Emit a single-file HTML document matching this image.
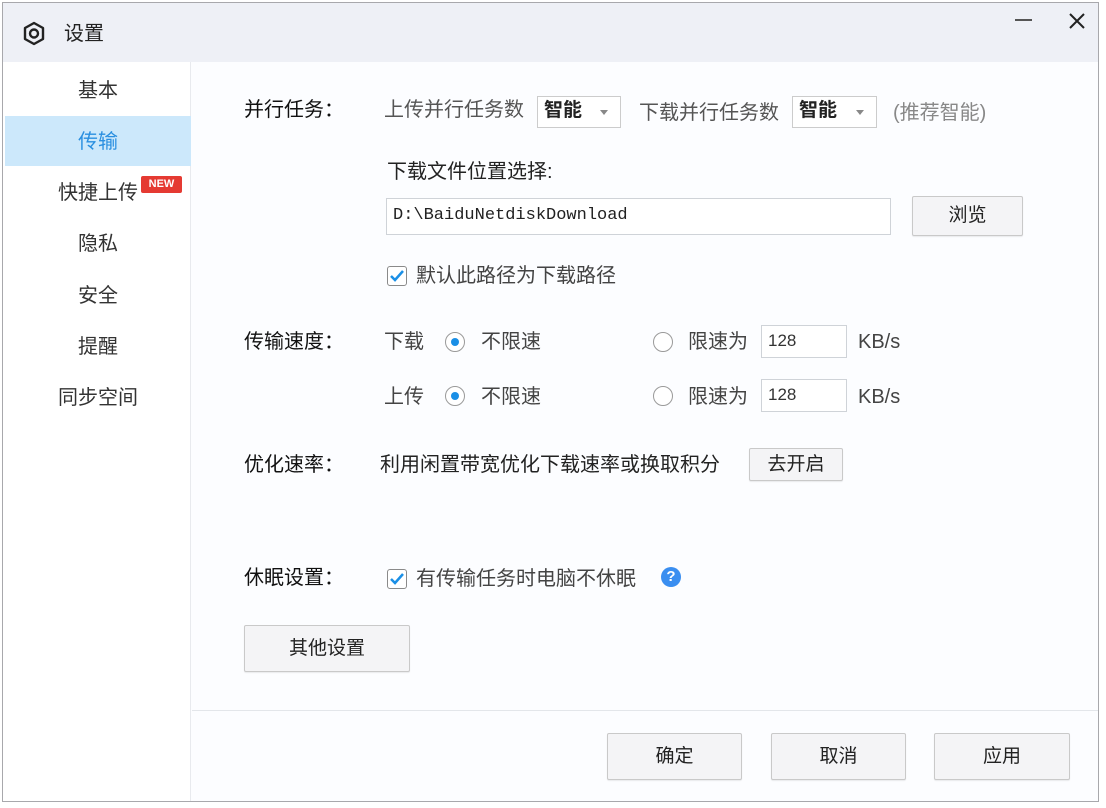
<!DOCTYPE html><html><head><meta charset="utf-8"><style>
*{margin:0;padding:0;box-sizing:border-box}
body{width:1106px;height:808px;background:#fff;position:relative;overflow:hidden;font-family:"Liberation Sans","Noto Sans CJK SC",sans-serif;color:#333;font-size:20px;line-height:1.2}
.a{position:absolute;white-space:nowrap}
.btn{position:absolute;border:1px solid #c9c9c9;background:#f4f4f6;border-radius:2px;text-align:center;color:#222;box-shadow:0 1px 1px rgba(0,0,0,.08);font-size:19px}
.sel{position:absolute;border:1px solid #ccc;background:#fff;height:32px;font-weight:bold;color:#222;padding:3px 0 0 6px;font-size:19px}
.sel:after{content:"";position:absolute;right:12px;top:13px;border:4px solid transparent;border-top:5px solid #888}
.rad{position:absolute;width:20px;height:20px;border:1px solid #9a9a9a;border-radius:50%;background:#fff}
.rad.on:after{content:"";position:absolute;left:5px;top:5px;width:8px;height:8px;border-radius:50%;background:#1a8fe6}
.inp{position:absolute;border:1px solid #cfd3d8;background:#fff;height:33px;font-size:17px;padding:5px 0 0 6px}
.chk{position:absolute;width:20px;height:20px;border:1px solid #8a8a8a;border-radius:3px;background:#fff}
</style></head><body>
<div class="a" style="left:2px;top:2px;width:1097px;height:800px;border:1px solid #a8a8ac;background:#fcfdff"></div>
<div class="a" style="left:3px;top:3px;width:1095px;height:59px;background:#eef0f6"></div>
<svg class="a" style="left:20px;top:20px" width="28" height="28" viewBox="0 0 28 28"><path d="M14 3 L23 8 L23 19 L14 24 L5 19 L5 8 Z" fill="none" stroke="#222" stroke-width="2.4" stroke-linejoin="round"/><circle cx="14" cy="13.5" r="4" fill="none" stroke="#222" stroke-width="2.4"/></svg>
<div class="a" style="left:64px;top:22px;font-size:20px;color:#222">设置</div>
<div class="a" style="left:1015px;top:19px;width:17px;height:2px;background:#555"></div>
<svg class="a" style="left:1067px;top:11px" width="20" height="20"><path d="M3 3L17 17M17 3L3 17" stroke="#222" stroke-width="2"/></svg>
<div class="a" style="left:3px;top:62px;width:188px;height:739px;background:#fff;border-right:1px solid #e8eaee"></div>
<div class="a" style="left:5px;top:116px;width:186px;height:50px;background:#cce8fb"></div>
<div class="a" style="left:78px;top:79px">基本</div>
<div class="a" style="left:78px;top:130px;color:#2a8fe0">传输</div>
<div class="a" style="left:58px;top:181px">快捷上传</div>
<div class="a" style="left:141px;top:176px;width:41px;height:17px;background:#e53a32;color:#fff;font-size:11px;font-weight:bold;text-align:center;line-height:17px;border-radius:2px">NEW</div>
<div class="a" style="left:78px;top:232px">隐私</div>
<div class="a" style="left:78px;top:284px">安全</div>
<div class="a" style="left:78px;top:335px">提醒</div>
<div class="a" style="left:58px;top:386px">同步空间</div>
<div class="a" style="left:244px;top:98px;color:#111">并行任务：</div>
<div class="a" style="left:384px;top:98px;color:#555">上传并行任务数</div>
<div class="sel" style="left:537px;top:96px;width:84px">智能</div>
<div class="a" style="left:639px;top:101px;color:#555">下载并行任务数</div>
<div class="sel" style="left:792px;top:96px;width:85px">智能</div>
<div class="a" style="left:893px;top:101px;color:#888">(推荐智能)</div>
<div class="a" style="left:387px;top:160px;color:#222">下载文件位置选择:</div>
<div class="inp" style="left:386px;top:198px;width:505px;height:37px;font-family:'Liberation Mono',monospace;color:#222;padding-top:7px">D:\BaiduNetdiskDownload</div>
<div class="btn" style="left:912px;top:196px;width:111px;height:40px;line-height:38px">浏览</div>
<div class="chk" style="left:387px;top:266px"></div>
<svg class="a" style="left:389px;top:268px" width="16" height="16"><path d="M2 8 L6 12 L14 3" fill="none" stroke="#1a8fe6" stroke-width="2.5"/></svg>
<div class="a" style="left:416px;top:264px;color:#444">默认此路径为下载路径</div>
<div class="a" style="left:244px;top:330px;color:#111">传输速度：</div>
<div class="a" style="left:384px;top:330px;color:#444">下载</div>
<div class="rad on" style="left:445px;top:332px"></div>
<div class="a" style="left:481px;top:330px;color:#444">不限速</div>
<div class="rad" style="left:653px;top:332px"></div>
<div class="a" style="left:688px;top:330px;color:#444">限速为</div>
<div class="inp" style="left:761px;top:325px;width:86px">128</div>
<div class="a" style="left:858px;top:330px;color:#444">KB/s</div>
<div class="a" style="left:384px;top:385px;color:#444">上传</div>
<div class="rad on" style="left:445px;top:386px"></div>
<div class="a" style="left:481px;top:385px;color:#444">不限速</div>
<div class="rad" style="left:653px;top:386px"></div>
<div class="a" style="left:688px;top:385px;color:#444">限速为</div>
<div class="inp" style="left:761px;top:379px;width:86px">128</div>
<div class="a" style="left:858px;top:385px;color:#444">KB/s</div>
<div class="a" style="left:244px;top:453px;color:#111">优化速率：</div>
<div class="a" style="left:380px;top:453px;color:#222">利用闲置带宽优化下载速率或换取积分</div>
<div class="btn" style="left:749px;top:448px;width:94px;height:33px;line-height:31px">去开启</div>
<div class="a" style="left:244px;top:566px;color:#111">休眠设置：</div>
<div class="chk" style="left:387px;top:569px"></div>
<svg class="a" style="left:389px;top:571px" width="16" height="16"><path d="M2 8 L6 12 L14 3" fill="none" stroke="#1a8fe6" stroke-width="2.5"/></svg>
<div class="a" style="left:416px;top:567px;color:#444">有传输任务时电脑不休眠</div>
<div class="a" style="left:661px;top:567px;width:20px;height:20px;border-radius:50%;background:#3a8ef0;color:#fff;font-size:15px;font-weight:bold;text-align:center;line-height:20px">?</div>
<div class="btn" style="left:244px;top:625px;width:166px;height:47px;line-height:45px">其他设置</div>
<div class="a" style="left:192px;top:710px;width:906px;height:1px;background:#e3e6ea"></div>
<div class="btn" style="left:607px;top:733px;width:135px;height:47px;line-height:45px">确定</div>
<div class="btn" style="left:771px;top:733px;width:135px;height:47px;line-height:45px">取消</div>
<div class="btn" style="left:934px;top:733px;width:136px;height:47px;line-height:45px">应用</div>
</body></html>
